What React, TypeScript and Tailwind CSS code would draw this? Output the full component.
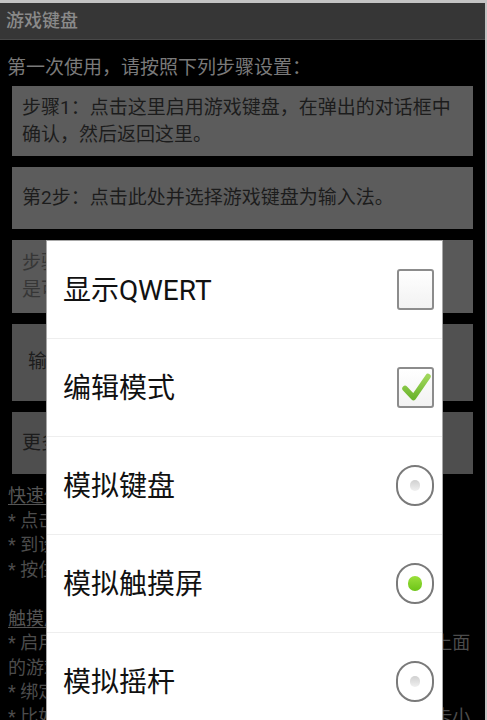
import React from "react";

const font = { fontFamily: 'Roboto, "Noto Sans CJK SC", "Noto Sans", sans-serif' };

function CheckBox({ checked }: { checked: boolean }) {
  return (
    <div className="w-[37px] h-[41px] rounded-[3px] border-2 border-[#8c8c8c] bg-gradient-to-b from-white to-[#f2f2f2] relative">
      {checked && (
        <svg className="absolute inset-0" width="33" height="37" viewBox="0 0 33 37">
          <defs>
            <linearGradient id="g1" x1="0" y1="0" x2="0" y2="1">
              <stop offset="0" stopColor="#9fd65a" />
              <stop offset="1" stopColor="#6cb52e" />
            </linearGradient>
          </defs>
          <path d="M6 19.5 L14.5 28.5 L29 7.5" fill="none" stroke="url(#g1)" strokeWidth="5.5" strokeLinecap="round" strokeLinejoin="round" />
        </svg>
      )}
    </div>
  );
}

function Radio({ checked }: { checked: boolean }) {
  return (
    <div className="w-[38px] h-[41px] rounded-full border-2 border-[#7a7a7a] bg-white flex items-center justify-center">
      {checked ? (
        <div className="w-[14px] h-[15px] rounded-full bg-gradient-to-b from-[#9be03a] to-[#6cc416]" />
      ) : (
        <div className="w-[10px] h-[11px] rounded-full bg-gradient-to-b from-[#d0d0d0] to-[#f0f0f0]" />
      )}
    </div>
  );
}

const rows: { label: string; kind: "check" | "radio"; checked: boolean }[] = [
  { label: "显示QWERT", kind: "check", checked: false },
  { label: "编辑模式", kind: "check", checked: true },
  { label: "模拟键盘", kind: "radio", checked: false },
  { label: "模拟触摸屏", kind: "radio", checked: true },
  { label: "模拟摇杆", kind: "radio", checked: false },
];

export default function App() {
  return (
    <div
      className="relative w-[487px] h-[720px] overflow-hidden bg-black border-t-[3px] border-r-[2px] border-[#c4c4c4]"
      style={font}
    >
      {/* Title bar */}
      <div className="h-[37px] bg-[#363636] border-b border-[#474747] flex items-center pl-[6px]">
        <span className="text-[18px] font-medium text-[#8a8a8a] leading-none">游戏键盘</span>
      </div>

      {/* Heading */}
      <div className="pt-[14px] pl-[7px] text-[19px] leading-[27px] text-[#7a7a7a] whitespace-nowrap">
        第一次使用，请按照下列步骤设置：
      </div>

      {/* Buttons */}
      <div className="mt-[5px] px-[12px] flex flex-col gap-[11px]">
        <div className="h-[70px] bg-[#5c5c5c] px-[10px] py-[8px] text-[19px] leading-[27px] text-[#1c1c1c]">
          <div className="whitespace-nowrap">步骤1：点击这里启用游戏键盘，在弹出的对话框中</div>
          <div className="whitespace-nowrap">确认，然后返回这里。</div>
        </div>
        <div className="h-[62px] bg-[#5c5c5c] px-[10px] flex items-center text-[19px] text-[#1c1c1c] whitespace-nowrap">
          第2步：点击此处并选择游戏键盘为输入法。
        </div>
        <div className="h-[73px] bg-[#595959] px-[10px] py-[9px] text-[19px] leading-[27px] text-[#363636] overflow-hidden">
          <div className="whitespace-nowrap">步骤3：点击这里设置游戏中需要使用的按键，这</div>
          <div className="whitespace-nowrap">是可选步骤。</div>
        </div>
        <div className="h-[77px] bg-[#515151] pl-[16px] flex items-center text-[19px] text-[#1c1c1c] whitespace-nowrap overflow-hidden">
          输入法设置
        </div>
        <div className="h-[62px] bg-[#4e4e4e] px-[10px] flex items-center text-[19px] text-[#1c1c1c] whitespace-nowrap overflow-hidden">
          更多设置
        </div>
      </div>

      {/* Help text */}
      <div className="mt-[10px] pl-[8px] text-[18px] leading-[24.5px] text-[#4c4c4c]">
        <div className="whitespace-nowrap underline underline-offset-2 text-[#555]">快速使用说明：</div>
        <div className="whitespace-nowrap">* 点击游戏键盘图标可以切换键盘布局。</div>
        <div className="whitespace-nowrap">* 到设置界面中可以自定义按键映射。</div>
        <div className="whitespace-nowrap">* 按住按键拖动可以调整位置和大小。</div>
        <div className="h-[24.5px]" />
        <div className="whitespace-nowrap underline underline-offset-2 text-[#555]">触摸屏模拟：</div>
        <div className="whitespace-nowrap">* 启用触摸屏模拟后，按键图标会叠加显示在屏幕的最上面</div>
        <div className="whitespace-nowrap">的游戏画面中，可以直接拖动调整位置。</div>
        <div className="whitespace-nowrap">* 绑定按键到屏幕上的任意位置即可模拟点击。</div>
        <div className="whitespace-nowrap">* 比如在设置中还可以分别选择按键的透明度以及按键卡小</div>
      </div>

      {/* Dialog overlay */}
      <div className="absolute left-[46px] top-[237px] w-[397px] h-[500px] bg-white border border-[#a8a8a8]">
        {rows.map((r, i) => (
          <div
            key={i}
            className="h-[98px] border-b border-[#eeeeee] flex items-center justify-between pl-[16px] pr-[8px]"
          >
            <span className="text-[28px] text-[#111] leading-none pt-[2px]">{r.label}</span>
            {r.kind === "check" ? <CheckBox checked={r.checked} /> : <Radio checked={r.checked} />}
          </div>
        ))}
      </div>
    </div>
  );
}
